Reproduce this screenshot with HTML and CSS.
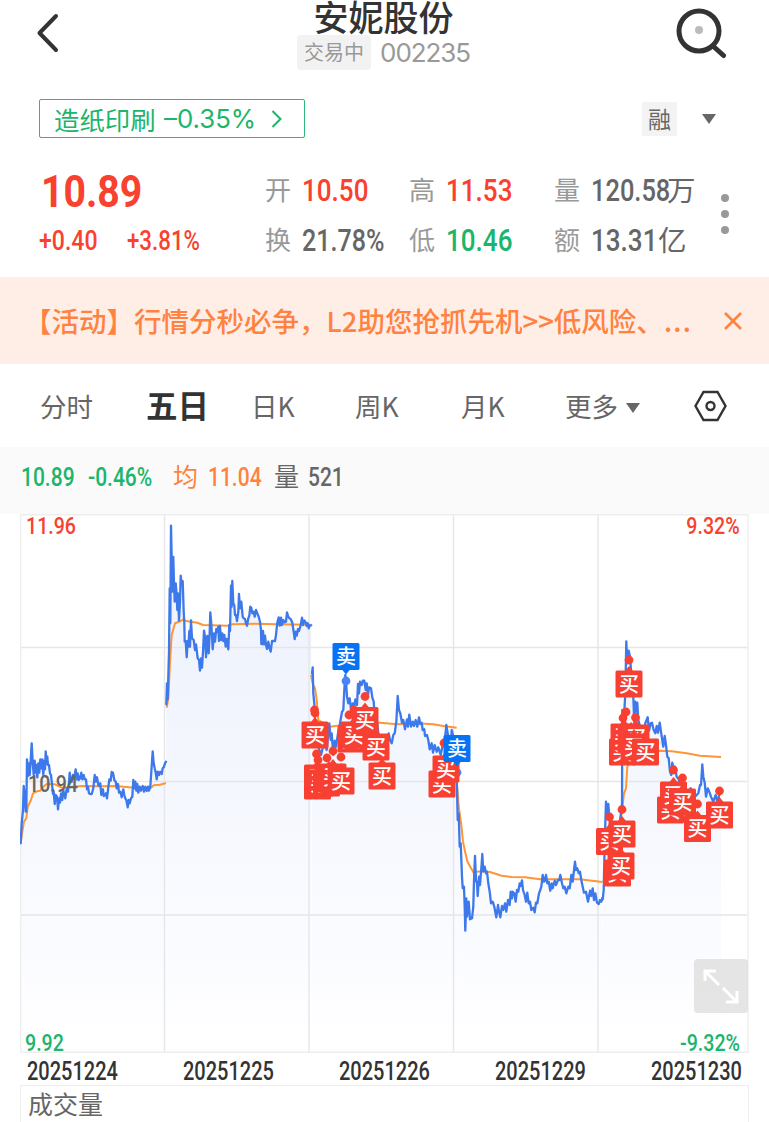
FILE: index.html
```html
<!DOCTYPE html>
<html lang="zh-CN">
<head>
<meta charset="utf-8">
<title>安妮股份 002235</title>
<link rel="stylesheet" href="styles.css">
</head>
<body>
<header class="header">
  <svg class="back" width="24" height="40" viewBox="0 0 24 40"><path d="M20 3 3.5 20 20 37"/></svg>
  <div class="heading">
    <h1 class="title">安妮股份</h1>
    <div class="subtitle"><span class="status">交易中</span><span class="code">002235</span></div>
  </div>
  <svg class="search" width="54" height="54" viewBox="0 0 54 54"><circle class="lens" cx="26" cy="25" r="20"/><path d="M40 40 50.500 49.500"/><circle class="pupil" cx="26" cy="24" r="4"/></svg>
</header>

<div class="sector-row">
  <a class="sector"><span class="sector-name">造纸印刷</span><span class="sector-change">–0.35%</span><svg width="12" height="20" viewBox="0 0 12 20"><path d="M1.5 2 9.5 10 1.5 18"/></svg></a>
  <div class="margin-tag"><span>融</span><i class="caret"></i></div>
</div>

<section class="quote">
  <div class="price up">
    <div class="last"><b class="num">10.89</b></div>
    <div class="delta"><span class="num">+0.40</span><span class="num pct">+3.81%</span></div>
  </div>
  <dl class="stats">
    <div><dt>开</dt><dd class="up"><span class="num">10.50</span></dd></div>
    <div><dt>高</dt><dd class="up"><span class="num">11.53</span></dd></div>
    <div><dt>量</dt><dd><span class="num n6">120.58</span><span class="unit">万</span></dd></div>
    <div><dt>换</dt><dd><span class="num pct">21.78%</span></dd></div>
    <div><dt>低</dt><dd class="down"><span class="num">10.46</span></dd></div>
    <div><dt>额</dt><dd><span class="num n5">13.31</span><span class="unit">亿</span></dd></div>
  </dl>
  <div class="more"><i></i><i></i><i></i></div>
</section>

<div class="banner">
  <p>【活动】行情分秒必争，L2助您抢抓先机&gt;&gt;低风险、<span class="ellipsis">...</span></p>
  <svg width="20" height="20" viewBox="0 0 20 20"><path d="M2 2 18 18M18 2 2 18"/></svg>
</div>

<nav class="tabs">
  <span>分时</span><span class="active">五日</span><span>日K</span><span>周K</span><span>月K</span><span>更多<i class="caret"></i></span>
  <svg width="34" height="32" viewBox="0 0 34 32"><path d="M9.5 2h14L31.500 16 23.500 30h-14L1.500 16Z"/><circle cx="16.500" cy="16" r="4"/></svg>
</nav>

<div class="legend">
  <span class="num down">10.89</span><span class="num down">-0.46%</span><span class="avg label">均</span><span class="num avg">11.04</span><span class="label">量</span><span class="num">521</span>
</div>

<main class="chart-panel">
  <div class="chart">
    <svg id="plot" width="729" height="539" viewBox="20 514 729 539">
      <defs>
        <linearGradient id="shade" gradientUnits="userSpaceOnUse" x1="0" y1="530" x2="0" y2="1040">
          <stop offset="0" stop-color="#ecf1fd"/><stop offset=".5" stop-color="#f5f7fe"/><stop offset=".85" stop-color="#fbfcff"/><stop offset="1" stop-color="#fff"/>
        </linearGradient>
      </defs>
    </svg>
    <span class="axis up top-left num">11.96</span>
    <span class="axis up top-right num">9.32%</span>
    <span class="axis mid num">10.94</span>
    <span class="axis down bottom-left num">9.92</span>
    <span class="axis down bottom-right num">-9.32%</span>
    <div class="expand"><svg width="54" height="54" viewBox="0 0 54 54"><path d="M11 22V12H22M12 13 25 26M29 29 42 42M32 43H43V32"/></svg></div>
  </div>
  <div class="dates"><span class="num">20251224</span><span class="num">20251225</span><span class="num">20251226</span><span class="num">20251229</span><span class="num">20251230</span></div>
  <div class="volume">成交量</div>
</main>
<script src="chart.js"></script>
</body>
</html>
```
FILE: styles.css
```css
* { box-sizing: border-box; }
body {
  margin: 0;
  width: 769px;
  height: 1122px;
  overflow: hidden;
  background: #fff;
  color: #666;
  font-family: "Noto Sans CJK SC", sans-serif;
}
svg { display: block; flex: none; fill: none; }
.num {
  display: inline-block;
  font-family: Roboto, "Noto Sans CJK SC", sans-serif;
  font-weight: 500;
  white-space: nowrap;
  transform: scaleX(.84);
  transform-origin: left center;
}
.num.pct { transform: scaleX(.81); }
.up { color: #f9412f; }
.down { color: #1bb56c; }
.avg { color: #ff8240; }
.caret {
  display: inline-block;
  border: 7px solid transparent;
  border-top: 10px solid #666;
  border-bottom: 0;
}

.header { display: flex; justify-content: space-between; height: 84px; padding: 0 42px 0 36px; }
.back { margin-top: 13px; stroke: #333; stroke-width: 4; stroke-linecap: round; stroke-linejoin: round; }
.heading { display: flex; flex-direction: column; align-items: center; margin-left: 34px; }
.title { margin: 0; height: 35px; font-size: 35px; line-height: 32px; font-weight: 500; color: #333; }
.subtitle { display: flex; align-items: center; gap: 9px; height: 35px; color: #999; }
.status { height: 35px; padding: 0 7px; border-radius: 4px; background: #f2f2f2; font-size: 20px; line-height: 34px; }
.code { font: 26px/35px Inter, sans-serif; letter-spacing: -1.1px; }
.search { margin-top: 6px; stroke: #333; stroke-width: 5; stroke-linecap: round; }
.search .pupil { fill: #bbb; stroke: none; }

.sector-row { display: flex; justify-content: space-between; height: 75px; padding: 15px 53px 0 39px; }
.sector { display: flex; align-items: center; width: 266px; height: 39px; padding-left: 14px; border: 1.5px solid #2cb97a; border-radius: 2px; color: #1bb56c; font-size: 25.4px; line-height: 34px; }
.sector-name { width: 110px; }
.sector-change { width: 107px; font: 25.8px/35px Inter, sans-serif; }
.sector svg { stroke: #1bb56c; stroke-width: 2; }
.margin-tag { display: flex; align-items: center; gap: 25px; height: 39px; padding-left: 1px; }
.margin-tag span { width: 35px; height: 34px; background: #f3f3f3; text-align: center; font-size: 23px; line-height: 33px; }

.quote { display: flex; height: 118px; padding: 7px 0 0 39px; }
.price { width: 226px; }
.last { height: 50px; padding-left: 2px; font-size: 43.5px; line-height: 46px; }
.last .num { font-weight: 700; transform: scaleX(.9); }
.delta { display: flex; height: 50px; font-size: 27.5px; line-height: 50px; }
.delta .num { width: 88px; }
.stats { display: grid; grid-template-columns: 144px 145px 160px; grid-auto-rows: 50px; width: 449px; margin: 0; line-height: 50px; }
.stats > div { display: flex; }
.stats dt { width: 37px; font-size: 26px; color: #999; line-height: 46px; }
.stats dd { display: flex; margin: 0; font-size: 31px; line-height: 49px; }
.stats .n6 { width: 76px; transform: scaleX(.82); }
.stats .n5 { width: 67px; }
.unit { font-size: 28.5px; line-height: 46px; }
.more { display: flex; flex-direction: column; gap: 8px; padding: 28px 0 0 7px; }
.more i { width: 8px; height: 8px; border-radius: 50%; background: #999; }

.banner { display: flex; align-items: center; justify-content: space-between; height: 87px; padding: 0 26px 0 24px; background: #ffeee6; color: #ff8240; }
.banner p { margin: -2px 0 0; font-size: 27.5px; line-height: 60px; font-weight: 500; white-space: nowrap; }
.ellipsis { letter-spacing: 1.3px; }
.banner svg { stroke: #ff8240; stroke-width: 2.6; }

.tabs { display: grid; grid-template-columns: 106px 105px 104px 106px 104px 129px 34px; align-items: center; height: 83px; padding-left: 40px; font-size: 26.5px; white-space: nowrap; }
.tabs > span { margin-top: -1px; }
.tabs .active { margin-top: -3px; color: #333; font-size: 31.5px; font-weight: 700; }
.tabs .caret { margin: 0 0 4px 8px; }
.tabs svg { stroke: #333; stroke-width: 2.4; }

.legend { display: grid; grid-template-columns: 67px 86px 34px 67px 33px 60px; align-items: center; height: 67px; padding: 0 0 7px 21px; background: #fafafa; font-size: 25px; }
.legend .label { margin: -5px 0 0 -1px; }

.chart-panel { padding: 0 20px; }
.chart { position: relative; height: 539px; }
.axis { position: absolute; font-size: 24.5px; line-height: 28px; transform: scaleX(.8); }
.top-left { left: 6px; top: -2px; }
.top-right { right: 9px; top: -2px; transform-origin: right center; }
.mid { left: 8px; top: 256px; color: #666; }
.bottom-left { left: 5px; bottom: -4px; }
.bottom-right { right: 9px; bottom: -4px; transform-origin: right center; }
.expand { position: absolute; right: 1px; top: 445px; border-radius: 4px; background: rgba(215, 215, 215, .65); stroke: #fff; stroke-width: 3; }
.grid { stroke: #e5e6e9; stroke-width: 1.4; }
.grid-edge { stroke: #eeeeef; stroke-width: 1.4; }
.area { fill: url(#shade); }
.line { stroke: #3d79ea; stroke-width: 2.3; stroke-linejoin: round; stroke-linecap: round; }
.average { stroke: #ff9635; stroke-width: 2; stroke-linejoin: round; }
.buy { fill: #f84032; }
.sell { fill: #0672f5; }
.dot-sell { fill: #4b83f5; }
.tag-text { fill: #fff; font-size: 20px; font-weight: 500; text-anchor: middle; }

.dates { display: flex; justify-content: space-between; height: 32px; padding: 3px 7px 0; font-size: 25px; line-height: 32px; color: #333; }
.dates .num { width: 91px; transform: scaleX(.8); }
.volume { height: 40px; padding-left: 7px; border: 1px solid #eee; border-bottom: 0; font-size: 25px; line-height: 35px; }
```
FILE: chart.js
```js
const plot = document.getElementById('plot');
const NS = 'http://www.w3.org/2000/svg';
function add(tag, attrs, text) {
  const el = document.createElementNS(NS, tag);
  for (const k in attrs) el.setAttribute(k, attrs[k]);
  if (text) el.textContent = text;
  plot.appendChild(el);
}
// Each session holds its origin and its points in thirds of a pixel.
const sessions = [
  { o: [15, 720],
    p: '17,370 20,310 24,270 26,198 29,225 32,275 34,275 36,118 39,168 41,130 44,165 47,120 50,70 53,128 56,165 59,122 61,158 64,135 67,172 70,130 73,158 76,118 79,145 82,118 85,165 88,122 90,148 92,94 95,132 97,110 99,135 102,135 105,160 108,165 111,192 114,222 116,215 119,252 122,225 126,230 129,268 132,235 135,248 138,220 142,240 145,210 148,225 151,235 155,205 159,215 162,185 164,158 167,180 170,185 174,165 178,172 182,148 185,178 188,160 191,180 195,175 199,158 202,178 206,165 209,178 213,178 216,208 219,200 222,220 226,222 230,222 235,205 239,165 242,185 246,172 250,195 253,198 256,190 259,225 264,208 266,228 270,225 273,220 276,235 279,210 283,178 287,182 290,156 294,158 298,180 302,185 305,205 309,192 312,218 316,215 320,232 325,208 328,225 331,235 334,240 338,262 341,240 344,250 348,235 352,230 355,180 358,205 361,185 364,212 367,192 370,218 374,200 378,212 383,198 387,215 391,200 395,213 399,200 402,212 406,200 409,155 413,94 416,130 419,145 422,158 425,178 428,155 432,165 436,155 440,162 443,145 446,142 450,130 453,125',
    a: '17,370 22,335 27,305 34,295 38,260 48,240 54,220 66,214 76,212 85,200 95,192 120,193 140,203 200,198 260,199 300,198 360,203 408,203 416,196 435,194 453,189' },
  { o: [160, 515],
    p: '19,568 21,505 23,553 27,410 29,220 31,325 33,32 35,130 37,230 40,126 42,205 44,260 47,205 50,240 52,285 54,235 57,317 60,260 62,182 65,210 68,198 71,290 73,322 74,380 77,378 80,427 83,378 85,395 88,348 90,395 93,316 96,370 101,375 105,405 108,388 110,405 113,430 117,435 120,467 123,430 126,458 129,410 132,347 135,365 138,427 142,363 146,415 149,350 151,292 154,325 158,403 162,355 165,380 169,342 172,350 175,335 177,378 180,333 183,375 187,355 190,378 193,360 197,395 200,372 205,403 208,330 210,348 213,212 215,275 217,198 220,265 223,270 225,300 228,300 231,318 235,290 237,237 240,280 244,260 248,305 251,310 255,312 258,325 261,332 265,310 268,302 271,275 274,278 277,295 281,290 284,305 288,285 292,295 296,305 300,320 303,345 304,387 308,387 309,348 312,388 315,362 318,390 321,402 325,380 328,397 332,410 336,378 340,378 345,378 348,360 352,323 356,307 359,332 363,308 366,330 370,315 374,322 378,320 381,292 384,303 388,310 392,312 397,323 401,350 404,372 407,350 410,362 414,342 417,348 422,330 426,308 429,330 433,316 437,322 440,333 443,325 446,340 449,331 454,331',
    a: '20,578 25,550 30,440 35,360 45,325 62,318 70,313 78,318 112,323 130,330 205,332 215,328 285,326 350,328 454,329' },
  { o: [300, 660],
    p: '36,40 38,22 40,100 43,130 47,230 55,260 63,285 72,248 80,270 88,190 92,240 95,220 100,285 104,242 108,260 114,220 120,190 126,155 130,150 133,90 136,45 138,63 141,110 145,130 149,115 154,155 158,130 162,145 166,118 171,135 174,72 177,100 180,65 185,75 188,62 193,62 197,90 200,70 204,105 207,82 213,85 217,112 221,125 224,170 232,190 238,250 249,260 258,230 262,252 266,220 270,240 275,250 280,225 284,220 289,185 293,108 297,150 301,160 306,188 310,180 315,208 321,178 324,200 328,164 333,200 338,185 342,198 347,180 352,200 357,172 361,192 365,188 368,210 373,208 375,228 381,225 385,240 389,268 395,250 399,278 404,255 410,275 415,262 422,285 429,250 435,235 439,195 444,225 451,270 455,210 470,270',
    a: '33,45 38,70 45,85 50,120 55,180 90,200 130,195 180,188 240,188 290,193 350,190 400,193 430,198 470,203' },
  { o: [430, 720],
    p: '80,170 83,300 86,280 89,380 92,370 96,470 98,505 102,500 104,560 106,632 109,535 111,590 116,545 120,598 126,595 130,560 132,480 135,408 138,480 141,490 143,528 147,470 150,495 155,430 157,402 160,455 164,440 168,460 171,455 175,490 179,515 183,550 188,545 193,560 199,592 204,555 207,575 211,592 216,558 220,570 225,550 229,575 234,540 239,555 242,515 246,535 248,515 253,520 257,545 261,510 265,515 269,490 272,498 276,481 279,510 284,525 288,545 292,518 296,550 300,545 304,570 310,563 314,577 318,548 322,550 327,520 331,510 334,500 338,465 342,485 345,482 348,465 352,490 356,485 361,512 365,490 368,505 374,482 378,495 384,480 388,480 391,465 396,490 400,505 404,500 409,520 415,500 419,505 424,465 428,485 432,450 435,425 438,450 442,445 446,460 450,455 454,480 458,500 462,518 468,515 474,545 480,512 484,528 488,505 492,540 496,520 501,548 506,552 510,540 514,545 517,535',
    a: '80,180 86,260 94,315 99,365 106,398 112,424 130,457 158,453 180,456 215,467 245,471 285,472 330,478 450,478 517,486' },
  { o: [590, 630],
    p: '38,808 41,780 44,640 48,515 51,565 55,522 58,560 62,555 67,590 72,610 80,600 90,570 96,530 97,240 102,260 106,190 109,34 112,100 116,62 120,80 123,120 127,150 130,200 133,280 136,215 139,245 142,218 145,270 149,285 153,310 158,292 162,305 166,280 173,262 177,302 182,280 186,278 191,300 196,310 200,288 204,308 209,278 213,305 216,325 220,350 224,318 228,345 232,380 236,385 240,425 244,435 247,398 251,415 255,410 260,440 266,448 272,470 280,490 288,510 295,485 302,475 308,505 315,500 325,490 330,465 333,465 337,403 340,440 344,458 348,500 353,475 358,485 363,500 370,515 377,495 383,520 388,490 393,480',
    a: '38,755 45,750 60,740 90,590 102,490 108,475 112,410 125,390 150,370 210,362 245,364 290,370 330,377 393,381' }
];
const scaled = (s, o) => s.split(' ').map(p => p.split(',').map((v, i) => (+v / 3 + o[i]).toFixed(1)));
const series = sessions.map(s => ({ p: scaled(s.p, s.o), a: scaled(s.a, s.o) }));

for (const s of series) {
  add('path', { class: 'area', d: `M${s.p[0][0]} 1053L${s.p.join('L')}V1053Z` });
}
for (const y of [647.5, 781.5, 915]) add('path', { class: 'grid', d: `M20 ${y}H748` });
for (const x of [164.5, 309, 453.5, 598]) add('path', { class: 'grid', d: `M${x} 514V1053` });
add('path', { class: 'grid-edge', d: 'M20.7 514.7H748V1052.3H20.7Z' });
for (const s of series) {
  add('polyline', { class: 'average', points: s.a.join(' ') });
  add('polyline', { class: 'line', points: s.p.join(' ') });
}

const dots = [[314.5, 710], [315, 713], [316.5, 754], [318, 760], [333, 751], [327, 758], [341, 757], [349, 715], [354, 710], [365, 696.5],
  [444, 743], [629, 660], [626, 712], [623, 718], [635.5, 717.5], [609.5, 817], [622, 809.5], [673.5, 770], [682.5, 778], [697.5, 804], [719.5, 791]];
for (const [cx, cy] of dots) add('circle', { class: 'buy', cx, cy, r: 4.4 });
add('circle', { class: 'dot-sell', cx: 346, cy: 681, r: 4.4 });
add('circle', { class: 'dot-sell', cx: 457, cy: 772.5, r: 4.4 });

// Trade tags in paint order: centre, and B for a buy or S for a sell.
const tags = [
  [315, 735, 'B'], [317.5, 786, 'B'], [317.5, 778, 'B'], [320, 783, 'B'], [326.5, 783, 'B'], [329, 779, 'B'], [333, 777, 'B'], [341, 781, 'B'],
  [351, 739, 'B'], [354, 735, 'B'], [365, 720.5, 'B'], [376, 747, 'B'], [382, 776, 'B'], [346, 656.5, 'S'],
  [442, 784, 'B'], [446, 769, 'B'], [457, 748.5, 'S'],
  [629, 684, 'B'], [622.5, 752, 'B'], [624, 737, 'B'], [631, 740, 'B'], [636, 738, 'B'], [634, 747, 'B'], [645.5, 752, 'B'],
  [609.5, 841.5, 'B'], [617.5, 873, 'B'], [621, 866, 'B'], [622, 834, 'B'],
  [670.5, 810, 'B'], [673.5, 795, 'B'], [682.5, 802, 'B'], [697.5, 828.5, 'B'], [719.5, 815, 'B']
];
for (const [x, y, kind] of tags) {
  const sell = kind === 'S';
  const cls = sell ? 'sell' : 'buy';
  const dir = sell ? 1 : -1;
  add('rect', { class: cls, x: x - 13.5, y: y - 13.5, width: 27, height: 27, rx: 1.5 });
  add('path', { class: cls, d: `M${x - 4} ${y + 13 * dir}L${x} ${y + 18 * dir}L${x + 4} ${y + 13 * dir}Z` });
  add('text', { class: 'tag-text', x, y: y + 7.5 }, sell ? '卖' : '买');
}
```
